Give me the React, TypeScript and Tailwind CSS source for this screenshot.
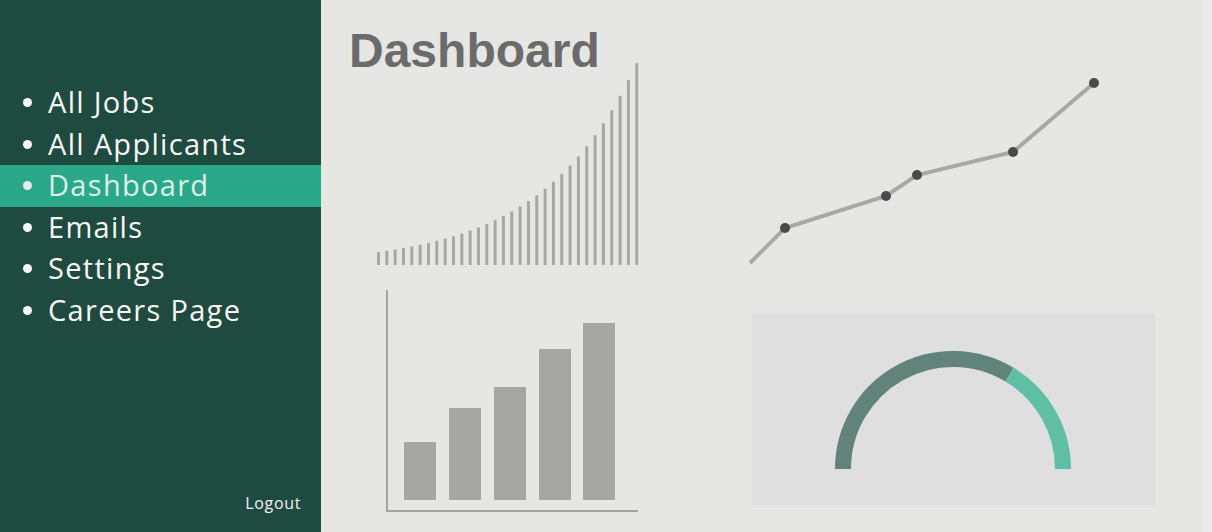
import React from 'react';

const navItems = ['All Jobs', 'All Applicants', 'Dashboard', 'Emails', 'Settings', 'Careers Page'];

// thin bars growing exponentially
const sparkBars = Array.from({ length: 32 }, (_, i) => 13 * Math.pow(1.0925, i));

const columns = [
  { x: 24, top: 154 },
  { x: 69, top: 120 },
  { x: 114, top: 99 },
  { x: 159, top: 61 },
  { x: 203, top: 35 },
];

const linePoints = [
  [10, 188],
  [45, 153],
  [146, 121],
  [177, 100],
  [273, 77],
  [354, 8],
];

function Sparkbars() {
  return (
    <svg width="270" height="206" viewBox="0 0 270 206" className="block">
      {sparkBars.map((h, i) => (
        <rect key={i} x={7 + i * 8.33} y={205 - h} width="3" height={h} fill="#a7a7a6" />
      ))}
    </svg>
  );
}

function ColumnChart() {
  return (
    <svg width="262" height="226" viewBox="0 0 262 226" className="block">
      <line x1="7" y1="2" x2="7" y2="224" stroke="#a3a3a3" strokeWidth="2" />
      <line x1="6" y1="223" x2="258" y2="223" stroke="#a3a3a3" strokeWidth="2" />
      {columns.map((c, i) => (
        <rect key={i} x={c.x} y={c.top} width="32" height={212 - c.top} fill="#a6a6a5" />
      ))}
    </svg>
  );
}

function LineChart() {
  const pts = linePoints.map((p) => p.join(',')).join(' ');
  return (
    <svg width="370" height="195" viewBox="0 0 370 195" className="block">
      <polyline points={pts} fill="none" stroke="#a8a8a7" strokeWidth="4" />
      {linePoints.slice(1).map(([x, y], i) => (
        <circle key={i} cx={x} cy={y} r="5" fill="#4a4a4a" />
      ))}
    </svg>
  );
}

function Gauge() {
  const cx = 201;
  const cy = 156;
  const r = 110;
  const a = (59 * Math.PI) / 180;
  const sx = cx + r * Math.cos(a);
  const sy = cy - r * Math.sin(a);
  return (
    <svg width="403" height="192" viewBox="0 0 403 192" className="block">
      <path d={`M ${cx - r} ${cy} A ${r} ${r} 0 0 1 ${sx} ${sy}`} fill="none" stroke="#62837a" strokeWidth="16" />
      <path d={`M ${sx} ${sy} A ${r} ${r} 0 0 1 ${cx + r} ${cy}`} fill="none" stroke="#5fbfa4" strokeWidth="16" />
    </svg>
  );
}

export default function App() {
  return (
    <div className="flex h-[532px] w-[1212px] overflow-hidden bg-[#e6e6e4]">
      <aside className="flex h-full w-[321px] shrink-0 flex-col bg-[#1f4a40] font-['Open_Sans',sans-serif]">
        <nav className="pt-[82px]">
          {navItems.map((item) => {
            const active = item === 'Dashboard';
            return (
              <div
                key={item}
                className={`flex h-[41.5px] items-center pl-[23px] text-[29px] tracking-[0.045em] ${
                  active ? 'bg-[#2aa888] text-[#dcefe9]' : 'text-[#f7f7f5]'
                }`}
              >
                <span className={`h-[9px] w-[9px] rounded-full ${active ? 'bg-[#e3ebe8]' : 'bg-[#f7f7f5]'}`} />
                <span className="-mt-[2px] ml-[16px] leading-none">{item}</span>
              </div>
            );
          })}
        </nav>
        <div className="mt-auto pb-[17px] pr-[20px] text-right text-[16px] tracking-[0.04em] text-[#f2f2f0]">Logout</div>
      </aside>

      <main className="flex flex-1">
        <section className="w-[380px] shrink-0 pl-[28px] pt-[27px]">
          <h1 className="h-[48px] font-['Liberation_Sans',sans-serif] text-[48px] font-bold leading-none text-[#6b6b6b]">
            Dashboard
          </h1>
          <div className="-mt-[15px] ml-[21px]">
            <Sparkbars />
          </div>
          <div className="ml-[31px] mt-[22px]">
            <ColumnChart />
          </div>
        </section>
        <section className="flex-1 pt-[75px]">
          <div className="ml-[39px]">
            <LineChart />
          </div>
          <div className="ml-[51px] mt-[43px] h-[192px] w-[403px] bg-[#e0dfdf]">
            <Gauge />
          </div>
        </section>
        <div className="w-[10px] bg-[#ebebeb]" />
      </main>
    </div>
  );
}
